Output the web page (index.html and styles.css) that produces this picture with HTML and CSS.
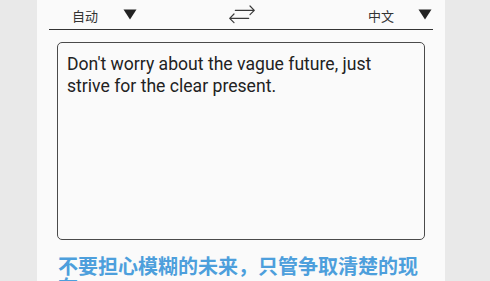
FILE: index.html
```html
<!DOCTYPE html>
<html lang="zh">
<head>
<meta charset="utf-8">
<link rel="stylesheet" href="styles.css">
</head>
<body>
<div class="panel">
  <div class="header">
    <div class="lang lang-left">
      <span class="lang-name">自动</span>
      <svg class="caret" width="14" height="11" viewBox="0 0 14 11"><path d="M0.5 0.5 H13.5 L7 10.5 Z" fill="#222"/></svg>
    </div>
    <svg class="swap" width="32" height="25" viewBox="0 0 32 25">
      <path d="M8.3 8.3 H27 M23 4 L27.3 8.3 L23 12.6" stroke="#3a3a3a" stroke-width="1.2" fill="none" stroke-linecap="round" stroke-linejoin="round"/>
      <path d="M2.7 16.3 H21.7 M7 12 L2.7 16.3 L7 20.6" stroke="#3a3a3a" stroke-width="1.2" fill="none" stroke-linecap="round" stroke-linejoin="round"/>
    </svg>
    <div class="lang lang-right">
      <span class="lang-name">中文</span>
      <svg class="caret" width="14" height="11" viewBox="0 0 14 11"><path d="M0.5 0.5 H13.5 L7 10.5 Z" fill="#222"/></svg>
    </div>
  </div>
  <div class="source">Don't worry about the vague future, just strive for the clear present.</div>
  <div class="result">不要担心模糊的未来，只管争取清楚的现在。</div>
</div>
</body>
</html>
```

FILE: styles.css
```css
html, body {
  margin: 0;
  padding: 0;
}
body {
  width: 490px;
  height: 281px;
  overflow: hidden;
  background: #e9e9e9;
  font-family: Roboto, "Noto Sans CJK SC", sans-serif;
}
.panel {
  margin-left: 37px;
  width: 408px;
  height: 281px;
  background: #fafafa;
  padding-top: 1px;
  box-sizing: border-box;
  overflow: hidden;
}
.header {
  margin: 0 12px;
  height: 28px;
  border-bottom: 1.2px solid #333;
  display: flex;
  align-items: flex-start;
}
.lang {
  display: flex;
  align-items: flex-start;
}
.lang-left {
  padding-left: 23px;
}
.lang-right {
  margin-left: auto;
  padding-right: 1px;
}
.lang-name {
  font-family: "Noto Sans CJK SC", sans-serif;
  font-size: 13px;
  line-height: 19px;
  color: #333;
  margin-top: 5px;
}
.caret {
  margin-left: 25px;
  margin-top: 8px;
}
.lang-right .caret {
  margin-left: 24px;
}
.swap {
  margin-top: 1px;
  margin-left: 90px;
}
.source {
  margin: 12px 0 0 20px;
  width: 368px;
  height: 198px;
  box-sizing: border-box;
  border: 1.5px solid #4a4a4a;
  border-radius: 5px;
  padding: 10px 9px;
  font-size: 17.6px;
  line-height: 22px;
  color: #222;
}
.result {
  margin: 15px 0 0 21px;
  width: 386px;
  font-family: "Noto Sans CJK SC", sans-serif;
  font-weight: bold;
  font-size: 20px;
  line-height: 21px;
  color: #4d9fdc;
}
```
